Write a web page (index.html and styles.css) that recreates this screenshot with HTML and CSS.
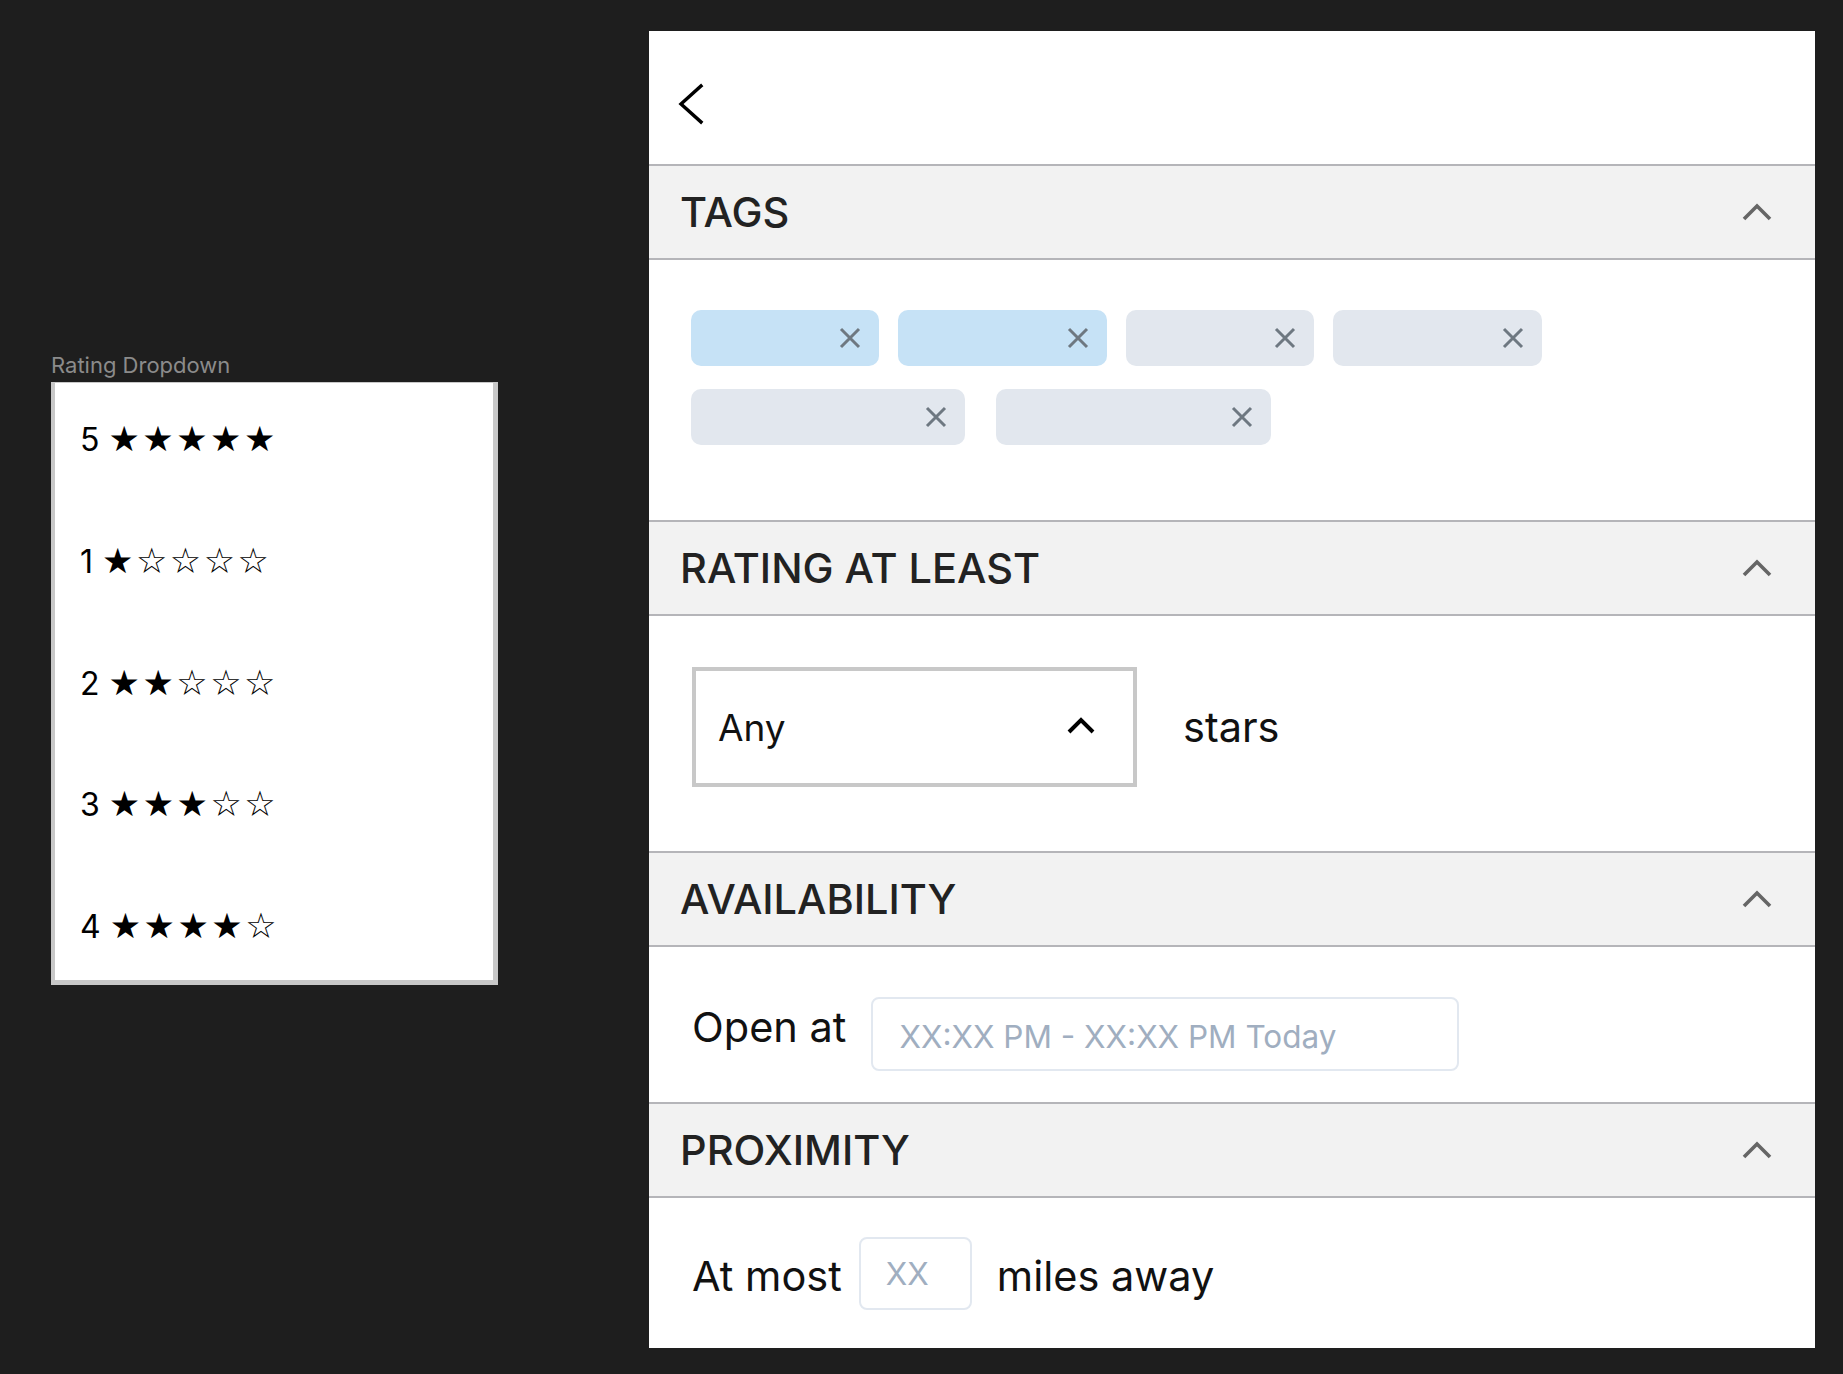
FILE: index.html
```html
<!DOCTYPE html>
<html>
<head>
<meta charset="utf-8">
<link rel="stylesheet" href="styles.css">
</head>
<body>
<div class="canvas">
  <div class="left-col">
    <div class="frame-label">Rating Dropdown</div>
    <div class="rating-list">
      <div class="rating-row"><span class="rt">5 <span class="stars">★★★★★</span></span></div>
      <div class="rating-row"><span class="rt">1 <span class="stars">★☆☆☆☆</span></span></div>
      <div class="rating-row"><span class="rt">2 <span class="stars">★★☆☆☆</span></span></div>
      <div class="rating-row"><span class="rt">3 <span class="stars">★★★☆☆</span></span></div>
      <div class="rating-row"><span class="rt">4 <span class="stars">★★★★☆</span></span></div>
    </div>
  </div>

  <div class="panel">
    <div class="topbar">
      <svg class="back" width="26" height="42" viewBox="0 0 26 42"><polyline points="23,3 3,21 23,39" fill="none" stroke="#000" stroke-width="3.4" stroke-linecap="square"/></svg>
    </div>

    <div class="sec-head"><span>TAGS</span>
      <svg class="caret" width="32" height="20" viewBox="0 0 32 20"><polyline points="3,17 16,4 29,17" fill="none" stroke="#666" stroke-width="3.6"/></svg>
    </div>
    <div class="sec-body tags-body">
      <div class="chip-row row1">
        <div class="chip blue w188"><svg class="x" width="22" height="22" viewBox="0 0 22 22"><path d="M2 2 L20 20 M20 2 L2 20" stroke="#6e7881" stroke-width="3"/></svg></div>
        <div class="chip blue w209"><svg class="x" width="22" height="22" viewBox="0 0 22 22"><path d="M2 2 L20 20 M20 2 L2 20" stroke="#6e7881" stroke-width="3"/></svg></div>
        <div class="chip gray w188"><svg class="x" width="22" height="22" viewBox="0 0 22 22"><path d="M2 2 L20 20 M20 2 L2 20" stroke="#6e7881" stroke-width="3"/></svg></div>
        <div class="chip gray w209"><svg class="x" width="22" height="22" viewBox="0 0 22 22"><path d="M2 2 L20 20 M20 2 L2 20" stroke="#6e7881" stroke-width="3"/></svg></div>
      </div>
      <div class="chip-row row2">
        <div class="chip gray w274"><svg class="x" width="22" height="22" viewBox="0 0 22 22"><path d="M2 2 L20 20 M20 2 L2 20" stroke="#6e7881" stroke-width="3"/></svg></div>
        <div class="chip gray w275"><svg class="x" width="22" height="22" viewBox="0 0 22 22"><path d="M2 2 L20 20 M20 2 L2 20" stroke="#6e7881" stroke-width="3"/></svg></div>
      </div>
    </div>

    <div class="sec-head"><span>RATING AT LEAST</span>
      <svg class="caret" width="32" height="20" viewBox="0 0 32 20"><polyline points="3,17 16,4 29,17" fill="none" stroke="#666" stroke-width="3.6"/></svg>
    </div>
    <div class="sec-body rating-body">
      <div class="select">
        <span>Any</span>
        <svg class="sel-caret" width="30" height="18" viewBox="0 0 30 18"><polyline points="3,15 15,3 27,15" fill="none" stroke="#000" stroke-width="4"/></svg>
      </div>
      <span class="txt stars-word">stars</span>
    </div>

    <div class="sec-head"><span>AVAILABILITY</span>
      <svg class="caret" width="32" height="20" viewBox="0 0 32 20"><polyline points="3,17 16,4 29,17" fill="none" stroke="#666" stroke-width="3.6"/></svg>
    </div>
    <div class="sec-body avail-body">
      <span class="txt">Open at</span>
      <div class="field time-field">XX:XX PM - XX:XX PM Today</div>
    </div>

    <div class="sec-head"><span>PROXIMITY</span>
      <svg class="caret" width="32" height="20" viewBox="0 0 32 20"><polyline points="3,17 16,4 29,17" fill="none" stroke="#666" stroke-width="3.6"/></svg>
    </div>
    <div class="sec-body prox-body">
      <span class="txt">At most</span>
      <div class="field xx-field">XX</div>
      <span class="txt miles">miles away</span>
    </div>
  </div>
</div>
</body>
</html>
```

FILE: styles.css
```css
* { box-sizing: border-box; }
html, body { margin: 0; padding: 0; }
body {
  background: #1e1e1e;
  font-family: "Inter", "Noto Sans", sans-serif;
  width: 1843px;
  height: 1374px;
  overflow: hidden;
}
.canvas {
  display: flex;
  align-items: flex-start;
  padding: 31px 0 0 51px;
  gap: 151px;
}
.left-col {
  width: 447px;
  margin-top: 322px;
}
.frame-label {
  color: #8b8b8b;
  font-size: 22px;
  line-height: 24px;
  margin-bottom: 5px;
  padding-left: 0;
}
.rating-list {
  background: #fff;
  border-style: solid;
  border-color: #c8c8c8;
  border-width: 1px 5px 5px 4px;
  height: 603px;
  display: flex;
  flex-direction: column;
  gap: 14.4px;
  padding-top: 2px;
}
.rating-row {
  height: 107.5px;
  flex-shrink: 0;
  display: flex;
  align-items: center;
  padding-left: 25px;
  color: #000;
}
.rt {
  font-size: 32px;
  white-space: pre;
}
.rating-row .stars {
  font-family: "DejaVu Sans", sans-serif;
  font-size: 35px;
  letter-spacing: 2.5px;
}

.panel {
  width: 1166px;
  height: 1317px;
  background: #fff;
  display: flex;
  flex-direction: column;
}
.topbar {
  height: 133px;
  padding: 52px 0 0 29px;
}
.back { display: block; }
.sec-head {
  height: 96px;
  background: #f2f2f2;
  border-top: 2px solid #b5b5b9;
  border-bottom: 2px solid #b5b5b9;
  display: flex;
  align-items: center;
  justify-content: space-between;
  padding: 0 42px 0 31px;
  font-size: 41.5px;
  font-weight: 500;
  color: #222;
}
.caret { display: block; }
.sec-body {
  display: flex;
  padding-left: 42px;
}
.tags-body {
  height: 260px;
  flex-direction: column;
  padding-top: 50px;
  gap: 23px;
}
.chip-row { display: flex; }
.row1 { gap: 19px; }
.row2 { gap: 31px; }
.chip {
  height: 56px;
  border-radius: 10px;
  display: flex;
  align-items: center;
  justify-content: flex-end;
  padding-right: 18px;
}
.chip.blue { background: #c6e2f6; }
.chip.gray { background: #e2e7ee; }
.w188 { width: 188px; }
.w209 { width: 209px; }
.w274 { width: 274px; }
.w275 { width: 275px; }
.x { display: block; }

.txt {
  font-size: 41.5px;
  color: #111;
}
.rating-body {
  height: 235px;
  padding-top: 51px;
  align-items: flex-start;
  padding-left: 43px;
}
.select {
  width: 445px;
  height: 120px;
  border: 4px solid #c8c8c8;
  display: flex;
  align-items: center;
  justify-content: space-between;
  padding: 0 37px 0 22px;
  font-size: 37px;
  color: #111;
}
.sel-caret { display: block; margin-top: -2px; }
.stars-word {
  margin-left: 46px;
  height: 120px;
  display: flex;
  align-items: center;
}
.avail-body {
  height: 155px;
  padding-top: 50px;
  padding-left: 43px;
  align-items: flex-start;
}
.avail-body .txt {
  height: 74px;
  display: flex;
  align-items: center;
  margin-top: -7px;
}
.field {
  border: 2px solid #e2e8f0;
  border-radius: 8px;
  height: 74px;
  display: flex;
  align-items: center;
  color: #a0aec0;
  font-size: 31.5px;
}
.time-field {
  width: 588px;
  margin-left: 25px;
  padding-left: 26px;
  padding-top: 4px;
}
.prox-body {
  height: 150px;
  padding-top: 39px;
  padding-left: 43px;
  align-items: flex-start;
}
.prox-body .txt {
  height: 73px;
  display: flex;
  align-items: center;
  margin-top: 2px;
}
.xx-field {
  width: 113px;
  height: 73px;
  margin-left: 17px;
  padding-left: 25px;
}
.miles { margin-left: 25px; }
```
